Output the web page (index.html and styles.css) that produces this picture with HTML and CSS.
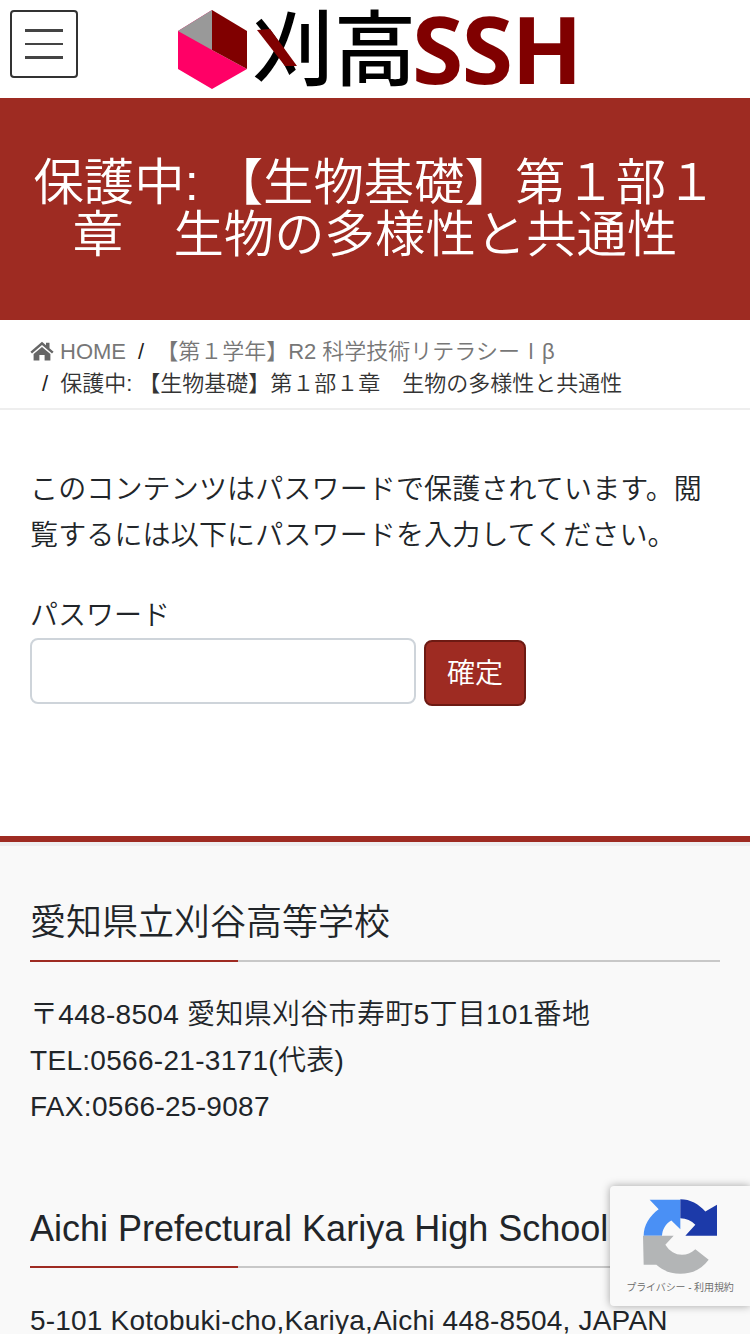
FILE: index.html
```html
<!DOCTYPE html>
<html lang="ja">
<head>
<meta charset="utf-8">
<title>保護中: 【生物基礎】第１部１章　生物の多様性と共通性</title>
<link rel="stylesheet" href="styles.css">
</head>
<body>
<div class="page">
  <header class="site-header">
    <button class="menu-btn" type="button" aria-label="menu"><span></span><span></span><span></span></button>
    <a class="logo" href="#">
      <svg class="logo-mark" viewBox="178 10 69 79" width="69" height="79" aria-hidden="true">
        <polygon points="212,10 178,31 178,69 212,89 247,69 212,50" fill="#ff0066"/>
        <polygon points="212,10 178,31 212,50" fill="#999999"/>
        <polygon points="212,10 247,31 247,69 212,50" fill="#800000"/>
      </svg>
      <span class="logo-kanji">刈高<svg class="logo-x" viewBox="0 0 40 37" width="40" height="37" aria-hidden="true"><polygon points="0,1 13,0 40,37 28,37" fill="#800000"/></svg></span>
      <span class="logo-ssh">SSH</span>
    </a>
  </header>
  <section class="title-band">
    <h1>保護中: 【生物基礎】第１部１章　生物の多様性と共通性</h1>
  </section>
  <nav class="crumbs">
    <ol>
      <li class="crumb crumb-link"><svg class="home" viewBox="0 0 24 20" width="24" height="20" aria-hidden="true"><path d="M12 0.8 L16 4.2 V1.8 H19.5 V7.2 L23.6 10.8 L22 12.6 L12 4 L2 12.6 L0.4 10.8 Z M12 6 L20.4 13 V19.4 H14.6 V14 H9.4 V19.4 H3.6 V13 Z"/></svg>HOME</li>
      <li class="crumb crumb-link"><span class="sep">/</span>【第１学年】R2 科学技術リテラシーⅠβ</li>
      <li class="crumb"><span class="sep">/</span>保護中: 【生物基礎】第１部１章　生物の多様性と共通性</li>
    </ol>
  </nav>
  <main class="content">
    <p class="notice">このコンテンツはパスワードで保護されています。閲覧するには以下にパスワードを入力してください。</p>
    <form class="pw-form">
      <label class="pw-label" for="pw">パスワード</label>
      <div class="pw-row">
        <input class="pw-input" id="pw" type="password">
        <button class="pw-submit" type="button">確定</button>
      </div>
    </form>
  </main>
  <footer class="site-footer">
    <section class="foot-block">
      <h2 class="foot-title">愛知県立刈谷高等学校</h2>
      <p class="foot-text">〒448-8504 愛知県刈谷市寿町5丁目101番地<br>TEL:0566-21-3171(代表)<br>FAX:0566-25-9087</p>
    </section>
    <section class="foot-block">
      <h2 class="foot-title">Aichi Prefectural Kariya High School</h2>
      <p class="foot-text foot-text-en">5-101 Kotobuki-cho,Kariya,Aichi 448-8504, JAPAN</p>
    </section>
  </footer>
  <aside class="recaptcha">
    <svg class="rc-icon" viewBox="158 88 222 224" width="74" height="75" aria-hidden="true">
      <path d="M160 198 C160 165 178 138 205 118 L178 90 L270 90 L270 178 L243 152 C226 162 216 178 215 198 Z" fill="#4a90f5"/>
      <path d="M270 88 C300 88 325 102 345 125 L380 105 L380 198 L285 198 L315 165 C303 152 288 145 270 145 Z" fill="#1c3aa9"/>
      <path d="M158 198 L250 198 L225 225 C238 245 255 255 275 255 C290 255 302 250 315 238 L355 270 C335 298 305 312 270 312 C240 312 218 302 198 285 L160 285 Z" fill="#b3b5b6"/>
    </svg>
    <div class="rc-links">プライバシー - 利用規約</div>
  </aside>
</div>
</body>
</html>
```
FILE: styles.css
```css
* { box-sizing: border-box; }
html, body { margin: 0; padding: 0; }
body {
  font-family: "Liberation Sans", "Noto Sans CJK JP", sans-serif;
  font-weight: 350;
  color: #212529;
  background: #fff;
}
.page { position: relative; width: 750px; height: 1334px; overflow: hidden; }

.site-header { height: 98px; display: flex; align-items: flex-start; padding: 10px 0 0 10px; background: #fff; }
.menu-btn {
  width: 68px; height: 68px; padding: 0; background: #fff;
  border: 2px solid #333; border-radius: 4px;
  display: flex; flex-direction: column; align-items: center; justify-content: center; gap: 11px;
}
.menu-btn span { display: block; width: 38px; height: 2.5px; background: #444; }
.logo { display: flex; align-items: flex-start; margin-left: 100px; text-decoration: none; color: #000; }
.logo-mark { display: block; flex: none; }
.logo-kanji { position: relative; margin-left: 5px; font-size: 82px; line-height: 82px; font-weight: 500; color: #000; white-space: nowrap; }
.logo-x { position: absolute; left: 5px; top: 19px; }
.logo-ssh { font-family: "Open Sans", sans-serif; font-weight: 700; font-size: 93px; line-height: 96px; margin-top: -10px; letter-spacing: -1.5px; color: #800000; margin-left: -4px; padding-right: 6px; }

.title-band { height: 222px; background: #9e2b22; color: #fff; display: flex; align-items: center; justify-content: center; padding: 0 30px; }
.title-band h1 { margin: 0; font-size: 50.4px; line-height: 52px; font-weight: 350; text-align: center; }

.crumbs { height: 90px; padding: 16px 30px 0; border-bottom: 2px solid #eee; }
.crumbs ol { margin: 0; padding: 0; list-style: none; display: flex; flex-wrap: wrap; }
.crumb { font-size: 22px; line-height: 32px; color: #333; padding-left: 12px; }
.crumb:first-child { padding-left: 0; }
.crumb-link { color: #777; }
.sep { color: #222; margin-right: 12px; }
.home { fill: #666; margin-right: 6px; vertical-align: -2px; }

.content { height: 426px; padding: 57px 30px 0; }
.notice { margin: 0; font-size: 28px; line-height: 46px; letter-spacing: .15px; }
.pw-form { margin-top: 34px; }
.pw-label { display: block; font-size: 28px; line-height: 46px; height: 45px; }
.pw-row { display: flex; align-items: flex-start; gap: 8px; }
.pw-input { width: 386px; height: 66px; border: 2px solid #ced4da; border-radius: 8px; background: #fff; }
.pw-submit {
  margin-top: 2px; width: 102px; height: 66px; padding: 0 0 4px;
  font: inherit; font-size: 28px; color: #fff;
  background: #9e2b22; border: 2px solid #6d1a13; border-radius: 8px;
}

.site-footer { border-top: 6px solid #9e2b22; height: 498px; background: #f9f9f9; box-shadow: inset 0 4px 0 #eeeef0; padding: 56px 30px 0; }
.foot-block { margin-bottom: 74px; }
.foot-title {
  margin: 0; font-size: 36px; line-height: 50px; font-weight: 350; padding-bottom: 14px;
  background: linear-gradient(#9e2b22, #9e2b22) left bottom / 208px 2px no-repeat, linear-gradient(#c8c8c8, #c8c8c8) left bottom / 100% 2px no-repeat;
  white-space: nowrap;
}
.foot-text { margin: 30px 0 0; font-size: 28px; line-height: 46px; letter-spacing: .3px; }
.foot-text-en { letter-spacing: .2px; }

.recaptcha {
  position: absolute; left: 610px; top: 1186px; width: 140px; height: 120px;
  background: #f9f9f9; border-radius: 4px 0 0 4px; box-shadow: 0 0 8px rgba(0,0,0,.35);
  display: flex; flex-direction: column; align-items: center;
}
.rc-icon { display: block; margin-top: 13px; flex: none; }
.rc-links { margin-top: 7px; font-size: 10px; line-height: 14px; color: #666; white-space: nowrap; letter-spacing: -.1px; }
```
